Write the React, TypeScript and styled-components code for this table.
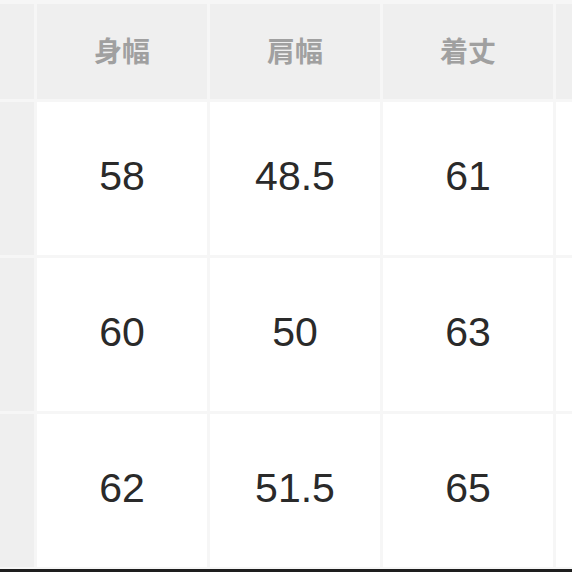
import styled, { createGlobalStyle } from "styled-components";

const GlobalStyle = createGlobalStyle`
  html, body {
    margin: 0;
    padding: 0;
    background: #f6f6f6;
  }
  body {
    width: 572px;
    height: 572px;
    overflow: hidden;
    font-family: "Liberation Sans", "Noto Sans CJK JP", sans-serif;
  }
`;

const headers = ["身幅", "肩幅", "着丈"];

const rows = [
  ["58", "48.5", "61"],
  ["60", "50", "63"],
  ["62", "51.5", "65"],
];

const Page = styled.div`
  display: flex;
  flex-direction: column;
  height: 572px;
  padding-top: 4px;
  box-sizing: border-box;
`;

const SizeTable = styled.div`
  display: grid;
  grid-template-columns: 34px 170px 170px 170px 1fr;
  grid-template-rows: 95px 153px 153px 153px;
  gap: 3px;
  background: #f6f6f6;
`;

const HeadCell = styled.div`
  display: flex;
  align-items: center;
  justify-content: center;
  padding-bottom: 4px;
  background: #efefef;
  color: #a0a0a0;
  font-family: "Noto Sans CJK JP", sans-serif;
  font-weight: 700;
  font-size: 28px;
  letter-spacing: 0;
`;

const SideCell = styled.div`
  background: #efefef;
`;

const ValueCell = styled.div`
  display: flex;
  align-items: center;
  justify-content: center;
  background: #ffffff;
  color: #2a2a2a;
  font-family: "Liberation Sans", Arial, sans-serif;
  font-size: 41px;
  padding-bottom: 4px;
`;

const BottomBar = styled.div`
  margin-top: auto;
  height: 3px;
  background: #1e1e1e;
`;

export default function App() {
  return (
    <>
      <GlobalStyle />
      <Page>
        <SizeTable>
          <SideCell />
          {headers.map((h) => (
            <HeadCell key={h}>{h}</HeadCell>
          ))}
          <HeadCell />
          {rows.map((r, i) => [
            <SideCell key={`s${i}`} />,
            ...r.map((v, j) => <ValueCell key={`${i}-${j}`}>{v}</ValueCell>),
            <ValueCell key={`e${i}`} />,
          ])}
        </SizeTable>
        <BottomBar />
      </Page>
    </>
  );
}
